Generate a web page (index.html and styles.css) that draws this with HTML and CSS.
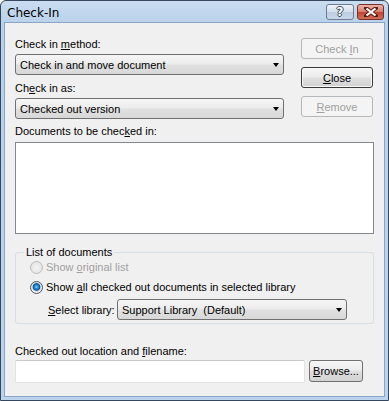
FILE: index.html
```html
<!DOCTYPE html>
<html lang="en">
<head>
    <meta charset="UTF-8">
    <meta name="viewport" content="width=device-width, initial-scale=1.0">
    <title>Check-In</title>
    <link rel="stylesheet" href="styles.css">
</head>
<body>

<div class="window">
    <div class="titlebar">
        <span class="title">Check-In</span>
        <div class="caption-buttons">
            <span class="cap help">?</span>
            <span class="cap close">
                <svg width="14" height="10" viewBox="0 0 14 10">
                    <path d="M2 1 L12 9 M12 1 L2 9" stroke="#5a1d16" stroke-width="4" stroke-linecap="square"/>
                    <path d="M2.5 1.5 L11.5 8.5 M11.5 1.5 L2.5 8.5" stroke="#fff" stroke-width="2.2"/>
                </svg>
            </span>
        </div>
    </div>

    <div class="client">
        <div class="top">
            <div class="fields">
                <div class="label">Check in <u>m</u>ethod:</div>
                <div class="combo first">Check in and move document<span class="arrow"></span></div>
                <div class="label gap">Ch<u>e</u>ck in as:</div>
                <div class="combo first">Checked out version<span class="arrow"></span></div>
            </div>
            <div class="actions">
                <button class="btn" disabled>Check <u>I</u>n</button>
                <button class="btn default"><u>C</u>lose</button>
                <button class="btn" disabled><u>R</u>emove</button>
            </div>
        </div>

        <div class="label docs">Documents to be chec<u>k</u>ed in:</div>
        <div class="listbox"></div>

        <div class="group">
            <span class="legend">List of documents</span>
            <div class="radio-row disabled">
                <span class="radio"></span>
                <span>Show <u>o</u>riginal list</span>
            </div>
            <div class="radio-row">
                <span class="radio checked"></span>
                <span>Show <u>a</u>ll checked out documents in selected library</span>
            </div>
            <div class="library-row">
                <span class="library-label"><u>S</u>elect library:</span>
                <div class="combo library">Support Library&nbsp; (Default)<span class="arrow"></span></div>
            </div>
        </div>

        <div class="label location">Checked out location and <u>f</u>ilename:</div>
        <div class="location-row">
            <div class="textbox"></div>
            <button class="btn browse"><u>B</u>rowse...</button>
        </div>
    </div>
</div>

</body>
</html>
```

FILE: styles.css
```css
body {
    margin: 0;
    font-family: "Liberation Sans", Arial, sans-serif;
    font-size: 11px;
    color: #000;
    background: #fff;
}

.window {
    width: 389px;
    height: 401px;
    box-sizing: border-box;
    border: 1px solid #34475e;
    border-radius: 6px 6px 0 0;
    padding: 0 3px 3px 3px;
    background: linear-gradient(#cadcf0, #b9d1ea 22px, #bcd3ec);
    display: flex;
    flex-direction: column;
}

.titlebar {
    height: 21px;
    display: flex;
    justify-content: space-between;
    align-items: flex-start;
}

.title {
    font-family: "DejaVu Sans", sans-serif;
    font-size: 12px;
    padding: 5px 0 0 3px;
}

.caption-buttons {
    display: flex;
    gap: 3px;
    margin: 3px 1px 0 0;
}

.cap {
    height: 14px;
    box-sizing: content-box;
    border: 1px solid #6b7b90;
    border-radius: 3px;
    display: flex;
    align-items: center;
    justify-content: center;
}

.help {
    width: 26px;
    background: linear-gradient(#eef3fa, #d2deec 50%, #bccde2 51%, #c9d8ea);
    color: #fff;
    font-family: "DejaVu Sans", sans-serif;
    font-weight: bold;
    font-size: 12px;
    text-shadow: 1px 0 #3d4a5a, -1px 0 #3d4a5a, 0 1px #3d4a5a, 0 -1px #3d4a5a;
}

.close {
    width: 25px;
    border-color: #7a3028;
    background: linear-gradient(#eab3a7, #d97c6b 50%, #c2442f 51%, #d0705a);
}

.client {
    flex: 1;
    background: #f0f0f0;
    border: 1px solid #8aa6c6;
    padding: 15px 10px 0 10px;
}

.top {
    display: grid;
    grid-template-columns: 269px 72px;
    column-gap: 17px;
}

.label {
    line-height: 13px;
}

.label.gap {
    margin-top: 7px;
}

.combo {
    height: 21px;
    box-sizing: border-box;
    border: 1px solid #707070;
    border-radius: 3px;
    background: linear-gradient(#f6f6f6, #ececec 45%, #e0e0e0 55%, #d8d8d8);
    display: flex;
    align-items: center;
    padding: 0 4px;
    white-space: nowrap;
}

.combo.first {
    margin-top: 3px;
}

.arrow {
    margin-left: auto;
    width: 0;
    height: 0;
    border-left: 3.5px solid transparent;
    border-right: 3.5px solid transparent;
    border-top: 4px solid #000;
    margin-top: 1px;
}

.actions {
    display: flex;
    flex-direction: column;
    gap: 8px;
}

.btn {
    font-family: "Liberation Sans", Arial, sans-serif;
    font-size: 11px;
    color: #000;
    height: 21px;
    padding: 0;
    border: 1px solid #707070;
    border-radius: 3px;
    background: linear-gradient(#f6f6f6, #ececec 45%, #dedede 55%, #d2d2d2);
}

.btn:disabled {
    color: #a0a0a0;
    border-color: #b4b8bb;
    background: #f4f4f4;
}

.btn.default {
    border-color: #3a3a3a;
    box-shadow: inset 0 0 0 1px #f8f8f8;
}

.docs {
    margin-top: 6px;
}

.listbox {
    margin-top: 4px;
    height: 92px;
    box-sizing: border-box;
    border: 1px solid #828790;
    background: #fff;
}

.group {
    position: relative;
    margin-top: 18px;
    height: 72px;
    box-sizing: border-box;
    border: 1px solid #d5dfe5;
    border-radius: 3px;
    padding: 7px 0 0 14px;
}

.legend {
    position: absolute;
    top: -7px;
    left: 8px;
    padding: 0 2px;
    line-height: 13px;
    background: #f0f0f0;
}

.radio-row {
    display: flex;
    align-items: center;
    gap: 3px;
    height: 14px;
}

.radio-row + .radio-row {
    margin-top: 6px;
}

.radio-row.disabled {
    color: #a0a0a0;
}

.radio {
    width: 13px;
    height: 13px;
    box-sizing: border-box;
    border-radius: 50%;
    border: 1px solid #bcbcbc;
    background: radial-gradient(circle, #f4f4f4 0, #e6e6e6 5px);
}

.radio.checked {
    border-color: #4c5560;
    background: radial-gradient(circle at 50% 45%, #8fdcff 0, #2a8fd6 1.6px, #0d5799 3.4px, #cfd6de 4.2px, #f2f4f6 5.5px);
}

.library-row {
    display: flex;
    align-items: center;
    margin: 5px 0 0 18px;
}

.library-label {
    width: 69px;
    flex-shrink: 0;
}

.combo.library {
    width: 230px;
}

.location {
    margin-top: 21px;
}

.location-row {
    display: flex;
    align-items: flex-start;
    gap: 4px;
    margin-top: 2px;
}

.textbox {
    width: 290px;
    height: 23px;
    box-sizing: border-box;
    border: 1px solid #e3e3e3;
    border-top-color: #c9c9c9;
    border-radius: 2px;
    background: #fff;
}

.btn.browse {
    width: 54px;
    height: 22px;
}
```
